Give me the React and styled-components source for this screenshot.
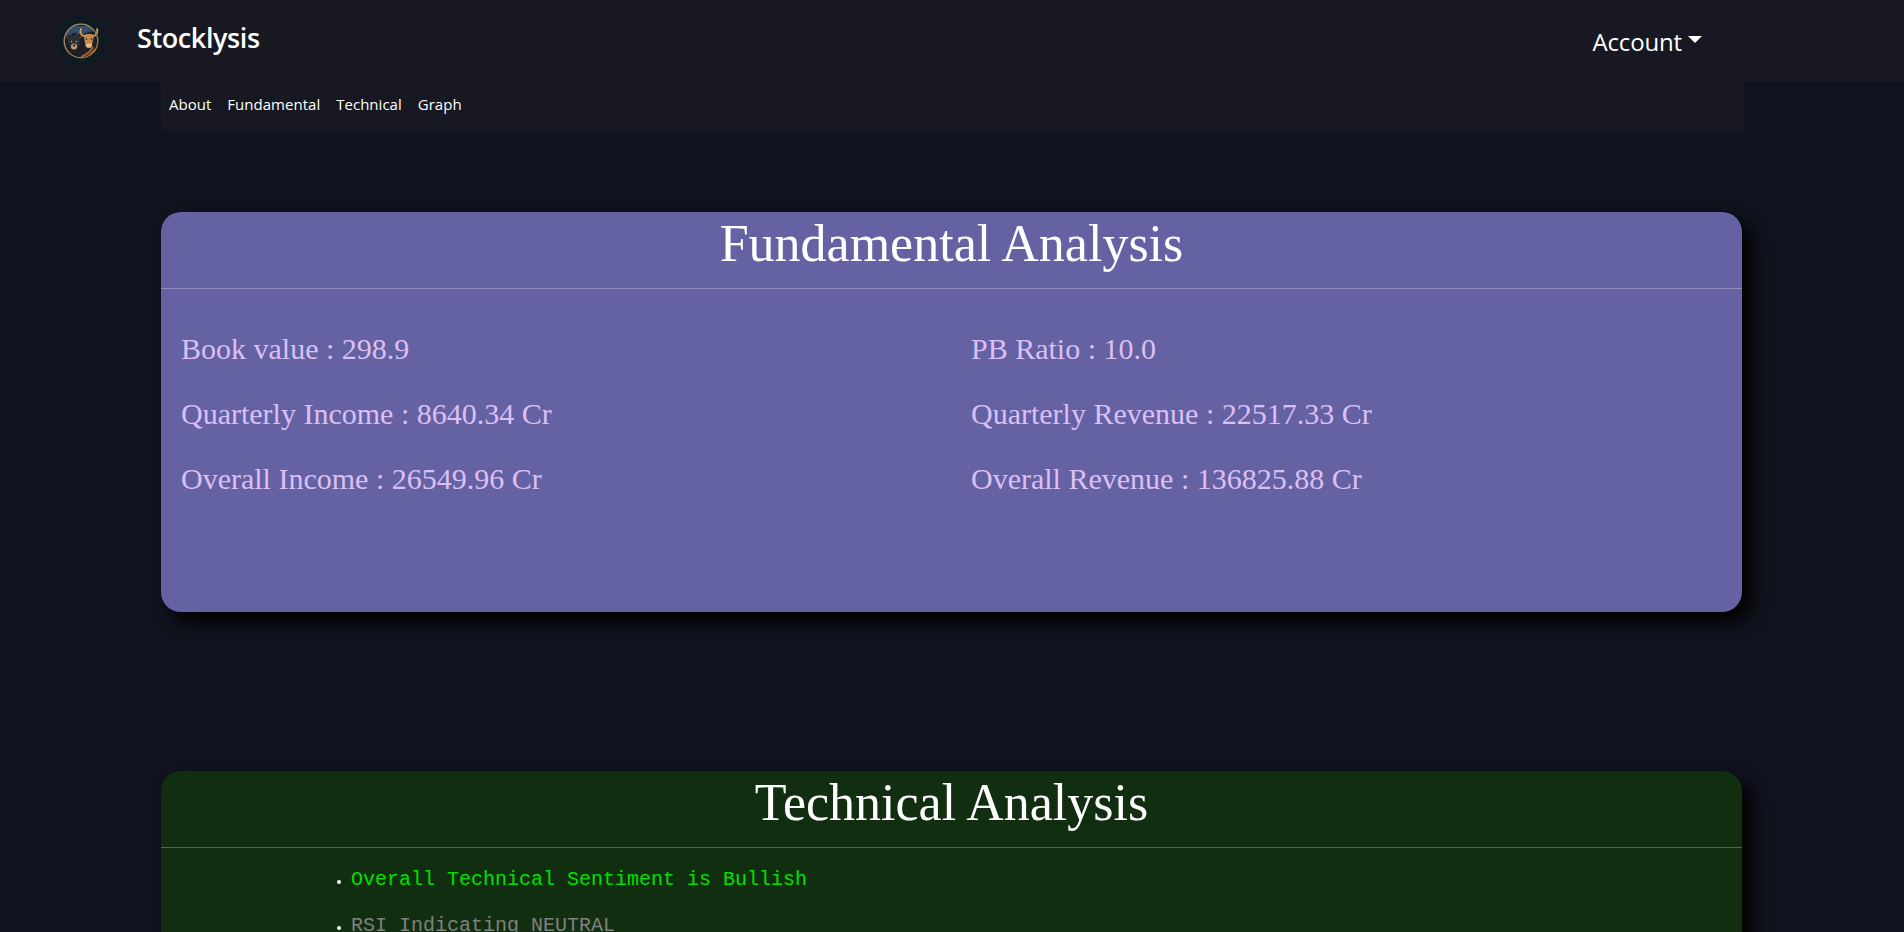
import React from 'react';
import styled, { createGlobalStyle } from 'styled-components';

const GlobalStyle = createGlobalStyle`
    html, body {
        margin: 0;
        padding: 0;
        height: 932px;
        overflow: hidden;
        background: #11131f;
    }
`

const Page = styled.div`
    width: 1904px;
    height: 932px;
    overflow: hidden;
    background: #11131f;
`

const TopBar = styled.header`
    height: 82px;
    background: #171821;
    display: flex;
    align-items: center;
    padding-left: 56px;
    font-family: "Open Sans", "Noto Sans", sans-serif;
    color: white;
`

const Brand = styled.div`
    margin-left: 31px;
    margin-top: -7px;
    font-size: 27px;
    font-weight: 600;
    letter-spacing: -0.4px;
`

const Account = styled.div`
    margin-left: auto;
    margin-right: 202px;
    font-size: 24px;
    display: flex;
    align-items: center;
    gap: 6px;
    letter-spacing: -0.15px;

    &::after {
        content: '';
        border-top: 7px solid white;
        border-left: 7px solid transparent;
        border-right: 7px solid transparent;
        margin-top: -3px;
    }
`

const SubNav = styled.nav`
    margin: 0 160px 0 161px;
    height: 50px;
    box-sizing: border-box;
    padding: 0 0 6px 8px;
    background: #171821;
    border-radius: 0 0 6px 6px;
    display: flex;
    align-items: center;
    gap: 16px;
    font-family: "Open Sans", "Noto Sans", sans-serif;
    font-size: 15px;
    letter-spacing: 0.02px;
    color: white;
`

const Card = styled.section`
    margin: ${p => p.top}px 162px 0 161px;
    height: ${p => p.height}px;
    background: ${p => p.bg};
    border-radius: 20px;
    box-shadow: 10px 10px 20px #000;
`

const Title = styled.h2`
    margin: 0;
    height: 77px;
    box-sizing: border-box;
    border-bottom: 1px solid ${p => p.line};
    font-family: "Liberation Serif", serif;
    font-weight: 400;
    font-size: 52px;
    line-height: 64px;
    text-align: center;
    color: white;
`

const Facts = styled.div`
    display: grid;
    grid-template-columns: 790px 1fr;
    padding: 27px 0 0 20px;
    font-family: "Liberation Serif", serif;
    font-size: 30px;
    line-height: 65px;
    color: #dcbff5;
`

const Signals = styled.ul`
    margin: 0;
    padding: 9px 0 0 190px;
    list-style: disc;
    font-family: "Liberation Mono", monospace;
    font-size: 20px;
    line-height: 46px;
    color: white;
`

const Signal = styled.li`
    & > span {
        color: ${p => p.color};
    }
    &::marker {
        font-size: 13px;
    }
`

const fundamentals = [
    'Book value : 298.9',
    'PB Ratio : 10.0',
    'Quarterly Income : 8640.34 Cr',
    'Quarterly Revenue : 22517.33 Cr',
    'Overall Income : 26549.96 Cr',
    'Overall Revenue : 136825.88 Cr',
];

const Logo = () => (
    <svg width="50" height="50" viewBox="0 0 50 50">
        <defs>
            <clipPath id="logo-disc">
                <circle cx="25" cy="25" r="16.500" />
            </clipPath>
            <linearGradient id="logo-ring" x1="0" y1="0" x2="1" y2="1">
                <stop offset="0" stopColor="#a39a88" />
                <stop offset="0.5" stopColor="#a9824f" />
                <stop offset="1" stopColor="#b9682a" />
            </linearGradient>
        </defs>
        <circle cx="25" cy="25" r="25" fill="#0e1c22" />
        <circle cx="25" cy="25" r="17" fill="#1b2027" />
        <g clipPath="url(#logo-disc)">
            <path d="M9 10h32v7c-3-2-6-2-8-1l-6 2c-4-1-9-2-12 0l-6 3z" fill="#334f6c" />
            <path d="M28 33c4 0 8-2 11-6v16H22z" fill="#20242a" />
            <path d="M25 41c5-2 9-5 12-10M29 42c4-2 7-5 10-9M33 42c2-1 4-3 6-6" stroke="#b0642a" strokeWidth="1.600" fill="none" />
        </g>
        <circle cx="13" cy="20" r="2.400" fill="#23282e" stroke="#6f6b63" strokeWidth="0.700" />
        <circle cx="23" cy="19.500" r="2.400" fill="#23282e" stroke="#6f6b63" strokeWidth="0.700" />
        <path d="M12 25c0-4 3-6 6-6s6 2 6 6c0 4-2 8-6 9-4-1-6-5-6-9z" fill="#2a3036" />
        <ellipse cx="18" cy="30.500" rx="3" ry="3" fill="#b89c78" />
        <ellipse cx="18" cy="29.500" rx="1.300" ry="0.900" fill="#15181c" />
        <circle cx="15.500" cy="25.500" r="0.700" fill="#c9b08c" />
        <circle cx="20.500" cy="25.500" r="0.700" fill="#c9b08c" />
        <path d="M25 13c-1.500 3-.5 6 3 7M41 13c1 3 0 6-3.500 7" stroke="#d79c62" strokeWidth="1.800" fill="none" strokeLinecap="round" />
        <path d="M27.500 19c3-1.500 8-1.500 11 0l-1.500 5-1 6c-.5 2-6 2-6.500 0l-1-6z" fill="#c4884f" />
        <ellipse cx="33" cy="29.500" rx="3" ry="2.300" fill="#e6b785" />
        <circle cx="30.500" cy="23" r="0.800" fill="#2a1a10" />
        <circle cx="35.500" cy="23" r="0.800" fill="#2a1a10" />
        <circle cx="25" cy="25" r="16.800" fill="none" stroke="url(#logo-ring)" strokeWidth="1.300" />
    </svg>
);

const App = () => {
    return (
        <Page>
            <GlobalStyle />
            <TopBar>
                <Logo />
                <Brand>Stocklysis</Brand>
                <Account>Account</Account>
            </TopBar>
            <SubNav>
                <span>About</span>
                <span>Fundamental</span>
                <span>Technical</span>
                <span>Graph</span>
            </SubNav>
            <Card top={80} height={400} bg="#6462a3">
                <Title line="#8f8dc0">Fundamental Analysis</Title>
                <Facts>
                    {fundamentals.map(text => <div key={text}>{text}</div>)}
                </Facts>
            </Card>
            <Card top={159} height={400} bg="#112f10">
                <Title line="#4d6a4c">Technical Analysis</Title>
                <Signals>
                    <Signal color="#00e000"><span>Overall Technical Sentiment is Bullish</span></Signal>
                    <Signal color="#808080"><span>RSI Indicating NEUTRAL</span></Signal>
                </Signals>
            </Card>
        </Page>
    )
}

export default App;
